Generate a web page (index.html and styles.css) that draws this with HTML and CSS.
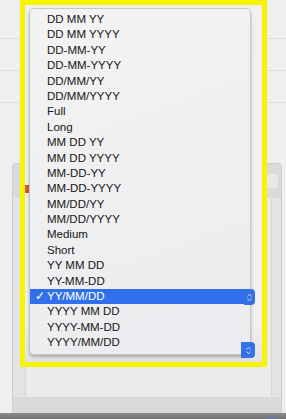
FILE: index.html
```html
<html>
<head>
  <link rel="stylesheet" href="styles.css">
</head>
<body>
  <div class="screen">
    <!-- background window behind the popup -->
    <div class="rows">
      <div class="row first"></div>
      <div class="row"></div>
      <div class="row"></div>
    </div>
    <div class="sheet">
      <div class="sheet-head">
        <div class="sheet-tab"></div>
      </div>
      <div class="sheet-body">
        <div class="sheet-inner"></div>
      </div>
      <div class="sheet-foot"></div>
    </div>
    <div class="dock">
      <span class="dock-icon"></span>
    </div>

    <!-- highlight frame -->
    <div class="frame">
      <div class="frame-fill"></div>
    </div>
    <span class="red-tab"></span>

    <!-- popup menu -->
    <div class="menu">
      <ul class="items">
        <li>DD MM YY</li>
        <li>DD MM YYYY</li>
        <li>DD-MM-YY</li>
        <li>DD-MM-YYYY</li>
        <li>DD/MM/YY</li>
        <li>DD/MM/YYYY</li>
        <li>Full</li>
        <li>Long</li>
        <li>MM DD YY</li>
        <li>MM DD YYYY</li>
        <li>MM-DD-YY</li>
        <li>MM-DD-YYYY</li>
        <li>MM/DD/YY</li>
        <li>MM/DD/YYYY</li>
        <li>Medium</li>
        <li>Short</li>
        <li>YY MM DD</li>
        <li>YY-MM-DD</li>
        <li class="selected"><span class="check">&#10003;</span>YY/MM/DD</li>
        <li>YYYY MM DD</li>
        <li>YYYY-MM-DD</li>
        <li>YYYY/MM/DD</li>
      </ul>
    </div>
    <span class="popup-arrow arrow-top">
      <svg width="5" height="9" viewBox="0 0 5 9"><path d="M0.5 3.5 L2.5 1.2 L4.5 3.5 M0.5 5.5 L2.5 7.8 L4.5 5.5" fill="none" stroke="#c9d8ff" stroke-width="1"/></svg>
    </span>
    <span class="popup-arrow arrow-bottom">
      <svg width="5" height="9" viewBox="0 0 5 9"><path d="M0.5 3.5 L2.5 1.2 L4.5 3.5 M0.5 5.5 L2.5 7.8 L4.5 5.5" fill="none" stroke="#c9d8ff" stroke-width="1"/></svg>
    </span>
  </div>
</body>
</html>
```

FILE: styles.css
```css
body {
  margin: 0;
  padding: 0;
  background: #ececec;
  font-family: "Liberation Sans", Arial, sans-serif;
}

.screen {
  position: relative;
  width: 286px;
  height: 419px;
  overflow: hidden;
  background: #efefef;
}

/* background rows */
.rows {
  height: 163px;
}

.row {
  height: 31px;
  border-bottom: 1px solid #dedede;
}

.row.first {
  height: 38px;
}

.sheet {
  margin: 0 4px 0 12px;
  height: 249px;
  background: #e4e4e4;
  border: 1px solid #cdcdcd;
  border-bottom: none;
  border-radius: 4px 4px 0 0;
  display: flex;
  flex-direction: column;
}

.sheet-head {
  height: 34px;
  background: #dadada;
  display: flex;
  justify-content: flex-end;
  align-items: center;
  padding-right: 3px;
}

.sheet-tab {
  width: 30px;
  height: 14px;
  background: #e8e8e8;
  border-radius: 3px;
}

.sheet-body {
  flex: 1;
  padding: 0 9px 0 12px;
  display: flex;
}

.sheet-inner {
  flex: 1;
  background: #ebebeb;
  border-left: 1px solid #d6d6d6;
  border-right: 1px solid #d6d6d6;
}

.sheet-foot {
  height: 16px;
  background: #d9d9d9;
}

.dock {
  height: 7px;
  background: linear-gradient(#8d8d8d, #6f6f6f);
  display: flex;
  justify-content: flex-end;
  padding-right: 10px;
}

.dock-icon {
  width: 6px;
  height: 6px;
  margin-top: 2px;
  border: 1px solid #3a7be8;
  border-radius: 50%;
}

/* yellow highlight */
.frame {
  position: absolute;
  left: 20px;
  top: 0;
  width: 237px;
  height: 357px;
  border: 5px solid #f6f400;
}

.frame-fill {
  height: 100%;
  background: linear-gradient(#f0f0f0 90%, #e2e2e2);
}

.red-tab {
  position: absolute;
  left: 25px;
  top: 185px;
  width: 4px;
  height: 8px;
  background: #d9553f;
}

/* popup menu */
.menu {
  position: absolute;
  left: 29px;
  top: 8px;
  width: 220px;
  height: 345px;
  background: linear-gradient(160deg, #f3f3f3, #ebecef);
  border: 1px solid #c6c6c6;
  border-radius: 5px;
  box-shadow: 0 2px 3px rgba(0,0,0,0.25);
}

.items {
  list-style: none;
  margin: 0;
  padding: 3px 0 0 0;
}

.items li {
  position: relative;
  height: 15.4px;
  line-height: 15.4px;
  padding-left: 17px;
  font-size: 11.5px;
  color: #1a1a1a;
  -webkit-text-stroke: 0.05px #1a1a1a;
  white-space: nowrap;
}

.items li.selected {
  background: #3070ec;
  color: #fff;
  -webkit-text-stroke: 0.05px #fff;
}

.check {
  position: absolute;
  left: 5px;
  top: 0;
  font-family: "DejaVu Sans", sans-serif;
  font-size: 12px;
  font-weight: bold;
}

.popup-arrow {
  position: absolute;
  left: 244px;
  width: 11px;
  height: 16px;
  background: #3570e6;
  border-radius: 0 4px 4px 0;
  display: flex;
  align-items: center;
  justify-content: center;
}

.arrow-top {
  top: 289px;
}

.arrow-bottom {
  top: 342px;
  left: 241px;
  width: 14px;
}
```
